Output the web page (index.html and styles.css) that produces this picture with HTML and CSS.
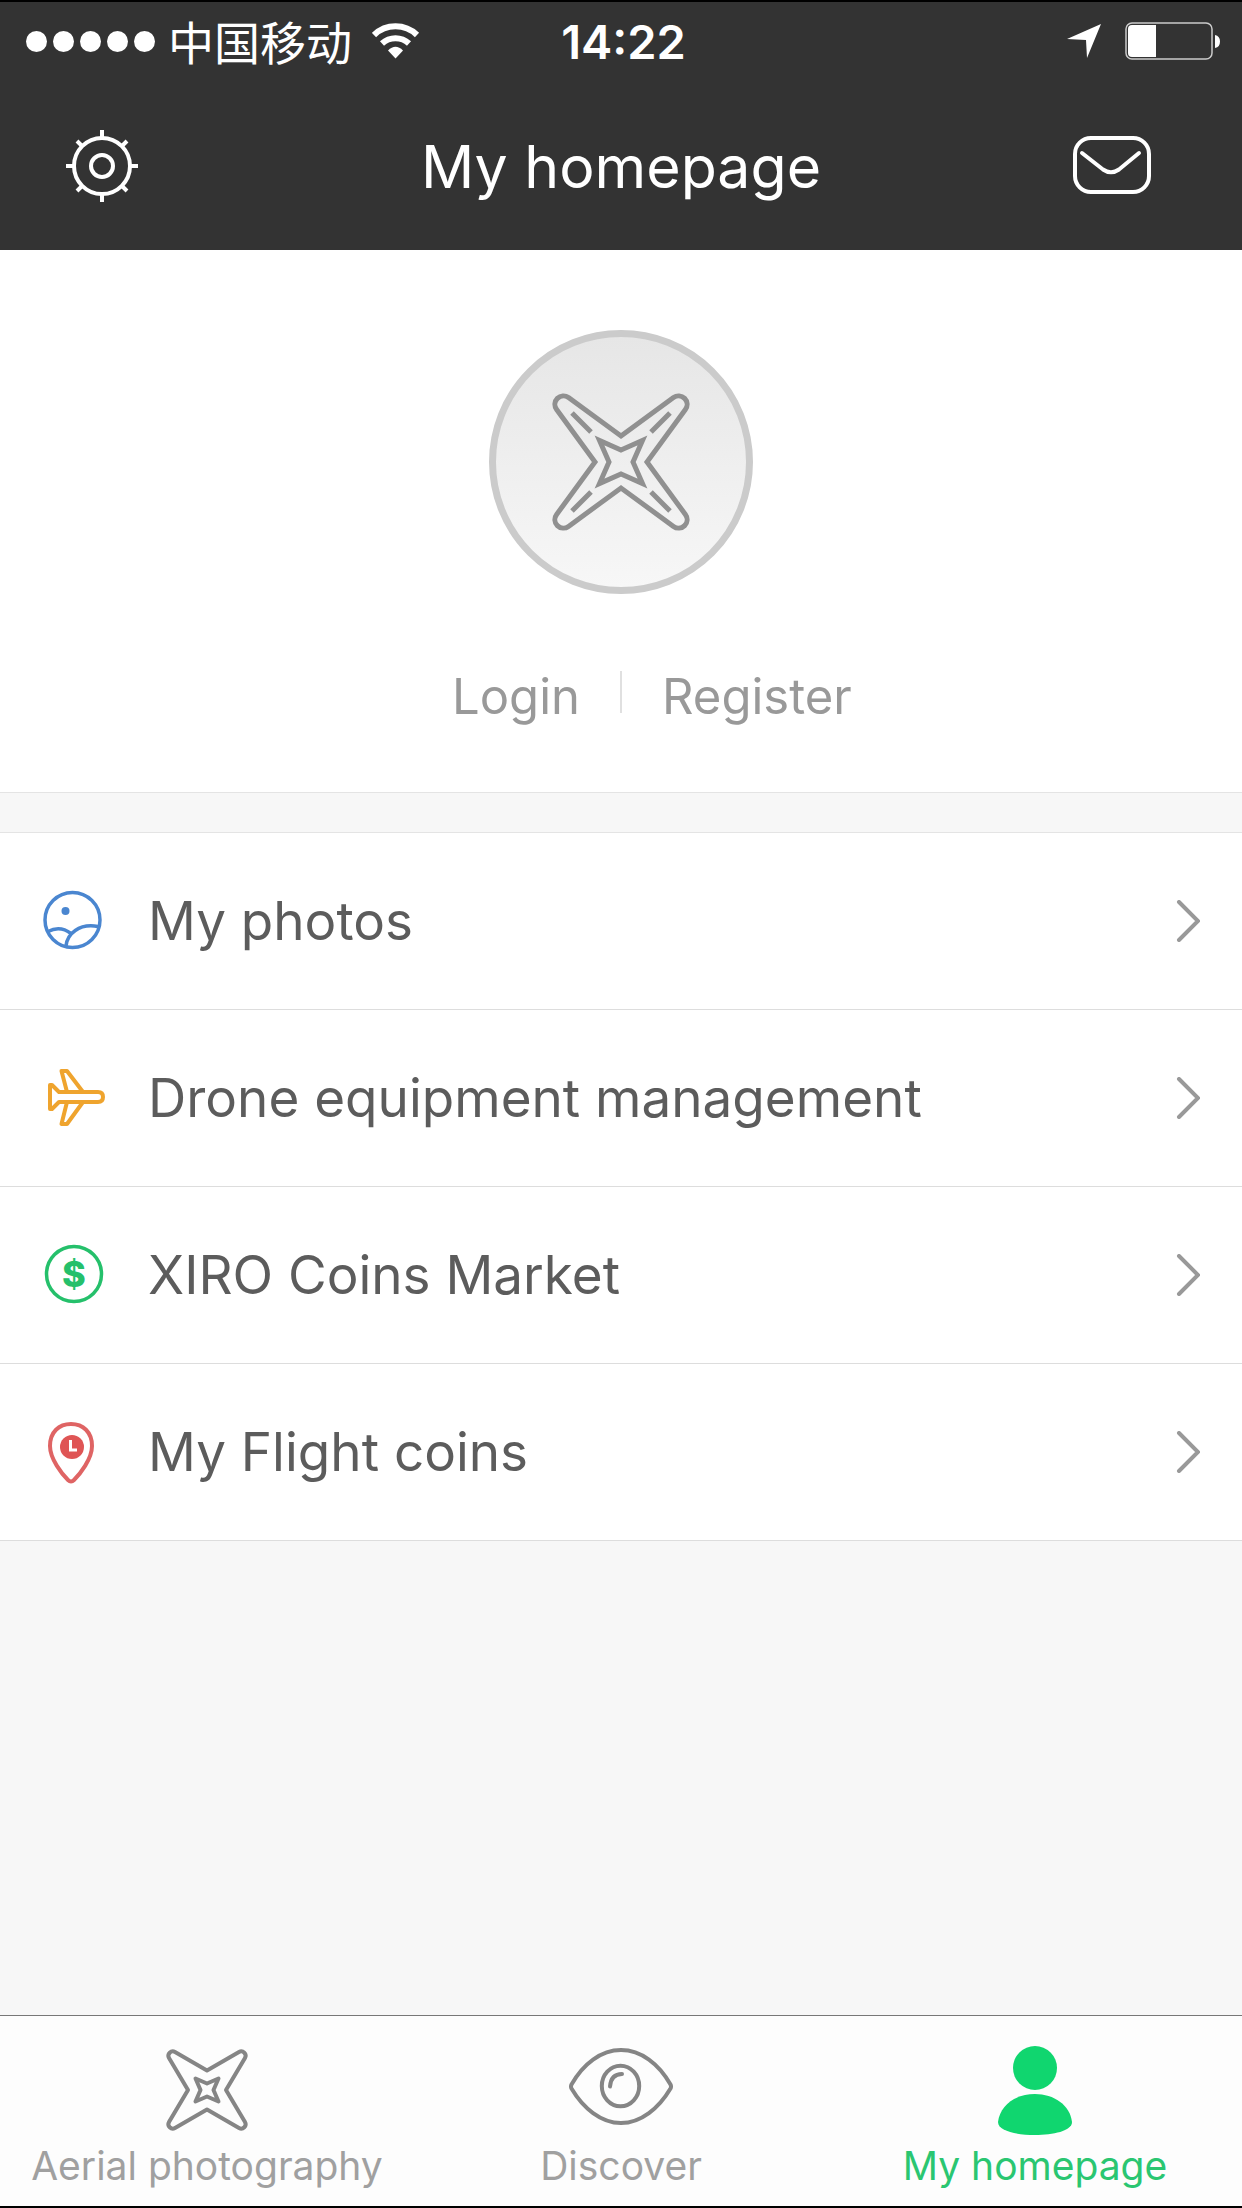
FILE: index.html
```html
<!DOCTYPE html>
<html lang="en">
<head>
<meta charset="utf-8">
<meta name="viewport" content="width=device-width, initial-scale=1">
<title>My homepage</title>
<link rel="stylesheet" href="styles.css">
</head>
<body>
<div class="app">
  <header class="top">
    <div class="status">
      <div class="status-left">
        <span class="signal"><i></i><i></i><i></i><i></i><i></i></span>
        <span class="carrier" lang="zh-CN">中国移动</span>
        <svg class="wifi" width="48" height="36" viewBox="0 0 48 36" aria-hidden="true">
          <path d="M2 12A31 31 0 0 1 45 12M10 20.500A20 20 0 0 1 37 20.500" fill="none" stroke="#fff" stroke-width="6"/>
          <path d="M16 27.500Q23.500 20 31 27.500L23.500 35.500Z" fill="#fff"/>
        </svg>
      </div>
      <time class="clock">14:22</time>
      <div class="status-right">
        <svg width="34" height="34" viewBox="0 0 34 34" aria-hidden="true"><path d="M34 0L20 34L19 16L0 15Z" fill="#fff"/></svg>
        <svg width="96" height="38" viewBox="0 0 96 38" aria-hidden="true">
          <rect x="1" y="1" width="86" height="36" rx="6" fill="none" stroke="#ccc" stroke-width="1.500"/>
          <path d="M31 3V35H7Q3 35 3 31V7Q3 3 7 3Z" fill="#fff"/>
          <path d="M90 13Q95 14 95 19.500T90 26Z" fill="#fff"/>
        </svg>
      </div>
    </div>
    <div class="navbar">
      <button class="nav-button" type="button" aria-label="Settings">
        <svg width="72" height="72" viewBox="-36 -36 72 72" fill="none" stroke="#fff" stroke-width="4">
          <circle r="28"/><circle r="11"/>
          <path d="M0-28V-36M0 28V36M-28 0H-36M28 0H36M-20-20L-25-25M20-20L25-25M-20 20L-25 25M20 20L25 25"/>
        </svg>
      </button>
      <h1 class="title">My homepage</h1>
      <button class="nav-button nav-mail" type="button" aria-label="Messages">
        <svg width="78" height="60" viewBox="0 0 78 60" fill="none" stroke="#fff" stroke-width="4" stroke-linecap="round">
          <rect x="2" y="2" width="74" height="54" rx="16"/>
          <path d="M9 17L30 33.500Q38 39 46 33.500L66 17"/>
        </svg>
      </button>
    </div>
  </header>

  <main class="content">
    <section class="profile">
      <div class="avatar">
        <svg width="140" height="140" viewBox="-70 -70 140 140" fill="none" stroke="#909090" stroke-width="5">
          <path d="M0-26L52.500-64.400A8.500 8.500 0 0 1 64.400-52.500L26 0L64.400 52.500A8.500 8.500 0 0 1 52.500 64.400L0 26L-52.500 64.400A8.500 8.500 0 0 1-64.400 52.500L-26 0L-64.400-52.500A8.500 8.500 0 0 1-52.500-64.400Z"/>
          <path d="M0-12L21.500-21.500L12 0L21.500 21.500L0 12L-21.500 21.500L-12 0L-21.500-21.500Z"/>
          <path d="M-49-49L-30-30M49-49L30-30M-49 49L-30 30M49 49L30 30"/>
        </svg>
      </div>
      <div class="account">
        <a class="account-link account-login" href="#login">Login</a>
        <span class="divider"></span>
        <a class="account-link" href="#register">Register</a>
      </div>
    </section>

    <nav class="menu" aria-label="My items">
      <a class="row" href="#photos">
        <svg class="row-icon" viewBox="0 0 64 64" fill="none" stroke="#4a86d0" stroke-width="3.500">
          <circle cx="30.500" cy="31" r="27.500"/>
          <circle cx="23.500" cy="22" r="4" fill="#4a86d0" stroke="none"/>
          <path d="M6 42.500Q18 36 29 44.500M24 57C25 45 37 34 56 37.500"/>
        </svg>
        <span class="row-label">My photos</span>
        <svg class="chevron" viewBox="0 0 24 42"><path d="M3 2L22 21L3 40"/></svg>
      </a>
      <a class="row" href="#drone">
        <svg class="row-icon" viewBox="0 0 64 64" fill="none" stroke="#efa42e" stroke-width="4" stroke-linejoin="round">
          <path d="M8 19H10L17 26H56Q61 26 61 31T56 36H17L10 43H8Z"/>
          <path d="M25 26L19.500 5H25L41 26M25 36L19.500 58H25L41 36"/>
        </svg>
        <span class="row-label">Drone equipment management</span>
        <svg class="chevron" viewBox="0 0 24 42"><path d="M3 2L22 21L3 40"/></svg>
      </a>
      <a class="row" href="#market">
        <svg class="row-icon" viewBox="0 0 64 64">
          <circle cx="32" cy="31" r="27.500" fill="none" stroke="#25c06b" stroke-width="3.500"/>
          <text class="coin-sign" x="32" y="44" text-anchor="middle">$</text>
        </svg>
        <span class="row-label">XIRO Coins Market</span>
        <svg class="chevron" viewBox="0 0 24 42"><path d="M3 2L22 21L3 40"/></svg>
      </a>
      <a class="row" href="#coins">
        <svg class="row-icon" viewBox="0 0 64 64" fill="none" stroke="#df6464" stroke-width="4">
          <path d="M29 4C17 4 8 12 8 26C8 39 20 54 26 60Q29 63 32 60C38 54 50 39 50 26C50 12 41 4 29 4Z"/>
          <circle cx="30" cy="27" r="12" fill="#df5555" stroke="none"/>
          <path d="M28.500 20V30H35" stroke="#fff" stroke-width="3"/>
        </svg>
        <span class="row-label">My Flight coins</span>
        <svg class="chevron" viewBox="0 0 24 42"><path d="M3 2L22 21L3 40"/></svg>
      </a>
    </nav>
  </main>

  <nav class="tabs" aria-label="Main">
    <a class="tab" href="#aerial">
      <svg class="tab-icon" viewBox="-52 -45 104 90" fill="none" stroke="#858585" stroke-width="4" stroke-linejoin="round">
        <path d="M0-19.500L32-38A4.400 4.400 0 0 1 38-32L19 0L38 32A4.400 4.400 0 0 1 32 38L0 19.500L-32 38A4.400 4.400 0 0 1-38 32L-19 0L-38-32A4.400 4.400 0 0 1-32-38Z"/>
        <path d="M0-6.500L11.500-11.500L6.500 0L11.500 11.500L0 6.500L-11.500 11.500L-6.500 0L-11.500-11.500Z"/>
      </svg>
      <span>Aerial photography</span>
    </a>
    <a class="tab" href="#discover">
      <svg class="tab-icon" viewBox="0 0 104 90" fill="none" stroke="#858585" stroke-width="4" stroke-linecap="round">
        <path d="M2.500 39.500C14 19 32 5 52 5S90 19 101.500 39.500Q102.500 41.500 101.500 43.500C90 63 72 78 52 78S14 63 2.500 43.500Q1.500 41.500 2.500 39.500Z"/>
        <ellipse cx="51.500" cy="41" rx="18.700" ry="20.300"/>
        <path d="M41 41.500Q42 29 53 29"/>
      </svg>
      <span>Discover</span>
    </a>
    <a class="tab tab-active" href="#home" aria-current="page">
      <svg class="tab-icon" viewBox="0 0 104 90" fill="#10d66f">
        <circle cx="52" cy="23" r="22"/>
        <path d="M15 77C17 60 33 49 52 49S87 60 89 77C89 86 70 90 52 90S15 86 15 77Z"/>
      </svg>
      <span>My homepage</span>
    </a>
  </nav>
</div>
</body>
</html>
```
FILE: styles.css
```css
* {
  box-sizing: border-box;
}

body {
  margin: 0;
  background: #f7f7f7;
  font-family: Inter, "Noto Sans CJK SC", sans-serif;
}

a {
  color: inherit;
  text-decoration: none;
}

svg {
  display: block;
  flex: none;
}

.app {
  display: flex;
  flex-direction: column;
  min-height: 100vh;
  border-top: 2px solid #000;
  border-bottom: 2px solid #000;
}

.top {
  background: #333;
  color: #fff;
}

.status {
  display: grid;
  grid-template-columns: 1fr auto 1fr;
  align-items: center;
  height: 80px;
  padding: 0 21px 2px 26px;
}

.status-left,
.status-right {
  display: flex;
  align-items: center;
}

.status-right {
  justify-content: flex-end;
  gap: 24px;
}

.signal {
  display: flex;
  gap: 6px;
}

.signal i {
  width: 21px;
  height: 21px;
  border-radius: 50%;
  background: #fff;
}

.carrier {
  margin: 0 20px 0 13px;
  padding-bottom: 2px;
  font-family: "Noto Sans CJK SC", sans-serif;
  font-size: 46px;
  font-weight: 400;
  line-height: 56px;
}

.clock {
  font-size: 47px;
  font-weight: 600;
}

.navbar {
  display: grid;
  grid-template-columns: 1fr auto 1fr;
  align-items: center;
  height: 168px;
  padding: 0 66px;
}

.nav-button {
  justify-self: start;
  padding: 0;
  border: 0;
  background: none;
}

.nav-mail {
  justify-self: end;
  padding: 0 25px;
}

.title {
  margin: 0;
  font-size: 59px;
  font-weight: 400;
}

.content {
  flex: 1;
}

.profile {
  padding: 80px 0 69px;
  border-bottom: 1px solid #e4e4e4;
  background: #fff;
}

.avatar {
  display: grid;
  place-items: center;
  width: 264px;
  height: 264px;
  margin: 0 auto;
  border: 7px solid #cbcbcb;
  border-radius: 50%;
  background: linear-gradient(#e6e6e6, #f7f7f7);
}

.account {
  display: grid;
  grid-template-columns: 1fr 2px 1fr;
  align-items: start;
  gap: 40px;
  margin-top: 77px;
  color: #999;
  font-size: 49px;
  line-height: 52px;
}

.account-login {
  justify-self: end;
}

.divider {
  height: 42px;
  background: #e0e0e0;
}

.menu {
  margin-top: 39px;
  border-top: 1px solid #e4e4e4;
  background: #fff;
}

.row {
  display: flex;
  align-items: center;
  gap: 42px;
  height: 177px;
  padding: 0 42px;
  border-bottom: 1px solid #ddd;
  color: #5c5c5c;
  font-size: 53px;
}

.row-icon {
  width: 64px;
  height: 64px;
}

.row-label {
  flex: 1;
}

.coin-sign {
  fill: #25c06b;
  font-size: 36px;
  font-weight: 800;
}

.chevron {
  width: 24px;
  height: 42px;
  fill: none;
  stroke: #999;
  stroke-width: 4;
  stroke-linecap: round;
}

.tabs {
  display: grid;
  grid-template-columns: repeat(3, 1fr);
  border-top: 1px solid #777;
  background: #fdfdfd;
}

.tab {
  display: flex;
  flex-direction: column;
  align-items: center;
  gap: 8px;
  padding: 29px 0 17px;
  color: #a0a0a0;
  font-size: 39px;
  line-height: 46px;
}

.tab-icon {
  width: 104px;
  height: 90px;
}

.tab-active {
  color: #2ac671;
}
```
